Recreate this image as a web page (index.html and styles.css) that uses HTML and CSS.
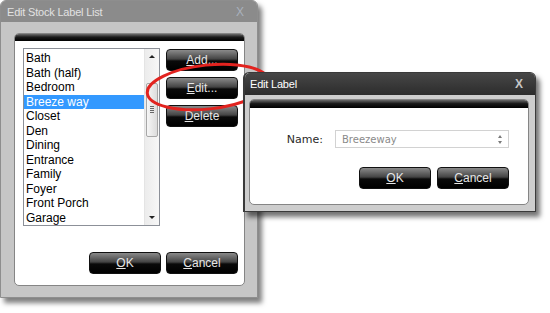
FILE: index.html
```html
<!DOCTYPE html>
<html lang="en">
<head>
    <meta charset="UTF-8">
    <title>Edit Stock Label List</title>
    <link rel="stylesheet" href="styles.css">
</head>
<body>
    <div class="desk">

        <div class="window main-win">
            <div class="titlebar">
                <span class="title">Edit Stock Label List</span>
                <span class="close dim">X</span>
            </div>
            <div class="win-body">
                <div class="panel">
                    <div class="panel-head"></div>
                    <div class="panel-content">
                        <div class="top-row">
                            <div class="listbox">
                                <ul class="items">
                                    <li>Bath</li>
                                    <li>Bath (half)</li>
                                    <li>Bedroom</li>
                                    <li class="selected">Breeze way</li>
                                    <li>Closet</li>
                                    <li>Den</li>
                                    <li>Dining</li>
                                    <li>Entrance</li>
                                    <li>Family</li>
                                    <li>Foyer</li>
                                    <li>Front Porch</li>
                                    <li>Garage</li>
                                </ul>
                                <div class="scrollbar">
                                    <span class="arrow up"></span>
                                    <div class="thumb"><span class="grip"></span></div>
                                    <span class="arrow down"></span>
                                </div>
                            </div>
                            <div class="side-buttons">
                                <button class="btn"><u>A</u>dd...</button>
                                <button class="btn"><u>E</u>dit...</button>
                                <button class="btn"><u>D</u>elete</button>
                            </div>
                        </div>
                        <div class="bottom-row">
                            <button class="btn"><u>O</u>K</button>
                            <button class="btn"><u>C</u>ancel</button>
                        </div>
                    </div>
                </div>
            </div>
        </div>

        <!-- highlight drawn round the Edit button -->
        <svg class="circle-mark" width="150" height="70" viewBox="0 0 150 70">
            <ellipse cx="68" cy="32" rx="61" ry="22" transform="rotate(-6 68 32)" fill="none" stroke="#e2231f" stroke-width="3"/>
        </svg>

        <div class="window label-win">
            <div class="titlebar dark">
                <span class="title">Edit Label</span>
                <span class="close">X</span>
            </div>
            <div class="win-body">
                <div class="panel">
                    <div class="panel-head"></div>
                    <div class="label-content">
                        <div class="name-row">
                            <label class="name-label">Name:</label>
                            <div class="text-input">
                                <span class="value">Breezeway</span>
                                <span class="spin">
                                    <span class="arrow up small"></span>
                                    <span class="arrow down small"></span>
                                </span>
                            </div>
                        </div>
                        <div class="bottom-row">
                            <button class="btn"><u>O</u>K</button>
                            <button class="btn"><u>C</u>ancel</button>
                        </div>
                    </div>
                </div>
            </div>
        </div>

    </div>
</body>
</html>
```

FILE: styles.css
```css
body, html {
    margin: 0;
    background: #ffffff;
    font-family: "Liberation Sans", Arial, sans-serif;
}
.desk {
    position: relative;
    width: 550px;
    height: 313px;
    overflow: hidden;
}

/* windows sit on a free canvas */
.window {
    position: absolute;
    box-sizing: border-box;
    display: flex;
    flex-direction: column;
    border-radius: 6px 6px 0 0;
}
.main-win {
    left: 0;
    top: 0;
    width: 258px;
    height: 298px;
    border: 1px solid #8e8e8e;
    background: #c6c6c6;
    box-shadow: 4px 5px 5px rgba(0, 0, 0, 0.5);
}
.label-win {
    left: 243px;
    top: 72px;
    width: 293px;
    height: 140px;
    border: 1px solid #3a3a3a;
    border-left-width: 2px;
    background: #cdcdcd;
    box-shadow: 4px 5px 5px rgba(0, 0, 0, 0.55);
    z-index: 3;
}

.titlebar {
    height: 21px;
    display: flex;
    align-items: center;
    justify-content: space-between;
    padding: 0 13px 0 6px;
    background: #8b8b8b;
    color: #e2e2e2;
    font-size: 11px;
    border-radius: 5px 5px 0 0;
}
.titlebar.dark {
    height: 23px;
    padding: 0 12px 0 5px;
    background: linear-gradient(#474747, #2c2c2c);
    color: #ffffff;
}
.title {
    letter-spacing: -0.2px;
}
.close {
    font-weight: bold;
    font-size: 12px;
    color: #c6c6c6;
}
.close.dim {
    font-weight: normal;
    color: #a9b1bd;
}

.win-body {
    flex: 1;
    display: flex;
    padding: 11px 12px 11px 13px;
}
.label-win .win-body {
    padding: 4px 6px 6px 4px;
}

.panel {
    flex: 1;
    display: flex;
    flex-direction: column;
    background: #ffffff;
    border: 1px solid #858585;
    border-radius: 5px;
    overflow: hidden;
}
.panel-head {
    height: 7px;
    background: linear-gradient(#6a6a6a, #1a1a1a 45%, #000000);
}
.label-win .panel-head {
    height: 8px;
}
.panel-content {
    flex: 1;
    display: flex;
    flex-direction: column;
    justify-content: space-between;
    padding: 7px 6px 11px 8px;
}

.top-row {
    display: flex;
    gap: 6px;
}
.listbox {
    width: 137px;
    height: 178px;
    box-sizing: border-box;
    border: 1px solid #8c9098;
    display: flex;
}
.items {
    flex: 1;
    list-style: none;
    margin: 0;
    padding: 2px 0 0 0;
    font-size: 12px;
    color: #000;
}
.items li {
    height: 14.5px;
    line-height: 14.5px;
    padding-left: 2px;
    white-space: nowrap;
}
.items li.selected {
    background: #3399ff;
    color: #ffffff;
}

.scrollbar {
    width: 14px;
    position: relative;
    background: linear-gradient(to right, #ececec, #f7f7f7);
    border-left: 1px solid #e4e4e4;
}
.arrow {
    position: absolute;
    left: 4px;
    width: 0;
    height: 0;
    border-left: 3px solid transparent;
    border-right: 3px solid transparent;
}
.arrow.up {
    top: 6px;
    border-bottom: 3px solid #222;
}
.arrow.down {
    bottom: 6px;
    border-top: 3px solid #222;
}
.thumb {
    position: absolute;
    left: 1px;
    right: 1px;
    top: 34px;
    height: 54px;
    box-sizing: border-box;
    border: 1px solid #a7a7a7;
    border-radius: 2px;
    background: linear-gradient(to right, #f6f6f6, #dcdcdc);
}
.grip {
    position: absolute;
    left: 3px;
    right: 3px;
    top: 22px;
    height: 7px;
    background: repeating-linear-gradient(#666 0, #666 1px, transparent 1px, transparent 2px);
}

.side-buttons {
    display: flex;
    flex-direction: column;
    gap: 6px;
    margin-top: 1px;
}
.bottom-row {
    display: flex;
    justify-content: flex-end;
    gap: 5px;
}

.btn {
    width: 72px;
    height: 22px;
    padding: 0;
    border: 1px solid #111;
    border-radius: 4px;
    background: linear-gradient(#8a8a8a 0%, #444444 45%, #0a0a0a 55%, #000000 100%);
    color: #e6e6e6;
    font-family: "Liberation Sans", Arial, sans-serif;
    font-size: 12px;
    text-align: center;
    cursor: pointer;
}
.btn u {
    text-decoration-thickness: 1px;
}

.circle-mark {
    position: absolute;
    left: 140px;
    top: 55px;
    z-index: 2;
}

.label-content {
    flex: 1;
    display: flex;
    flex-direction: column;
    padding: 22px 19px 15px 0;
}
.label-content .bottom-row {
    gap: 6px;
    margin-top: 19px;
}
.name-row {
    display: flex;
    justify-content: flex-end;
    align-items: center;
    gap: 12px;
}
.name-label {
    font-family: "DejaVu Sans", Verdana, sans-serif;
    font-size: 11px;
    color: #2a2a2a;
}
.text-input {
    position: relative;
    width: 174px;
    height: 18px;
    box-sizing: border-box;
    border: 1px solid #d2d2d2;
    background: #ffffff;
    display: flex;
    align-items: center;
    padding-left: 6px;
}
.value {
    font-family: "DejaVu Sans", Verdana, sans-serif;
    font-size: 10px;
    color: #8a8a8a;
}
.spin {
    position: absolute;
    right: 2px;
    top: 1px;
    bottom: 1px;
    width: 9px;
}
.arrow.small.up {
    left: 1px;
    top: 3px;
    border-left-width: 2.5px;
    border-right-width: 2.5px;
    border-bottom: 3px solid #7a7a7a;
}
.arrow.small.down {
    left: 1px;
    bottom: 2px;
    border-left-width: 2.5px;
    border-right-width: 2.5px;
    border-top: 3px solid #7a7a7a;
}
```
